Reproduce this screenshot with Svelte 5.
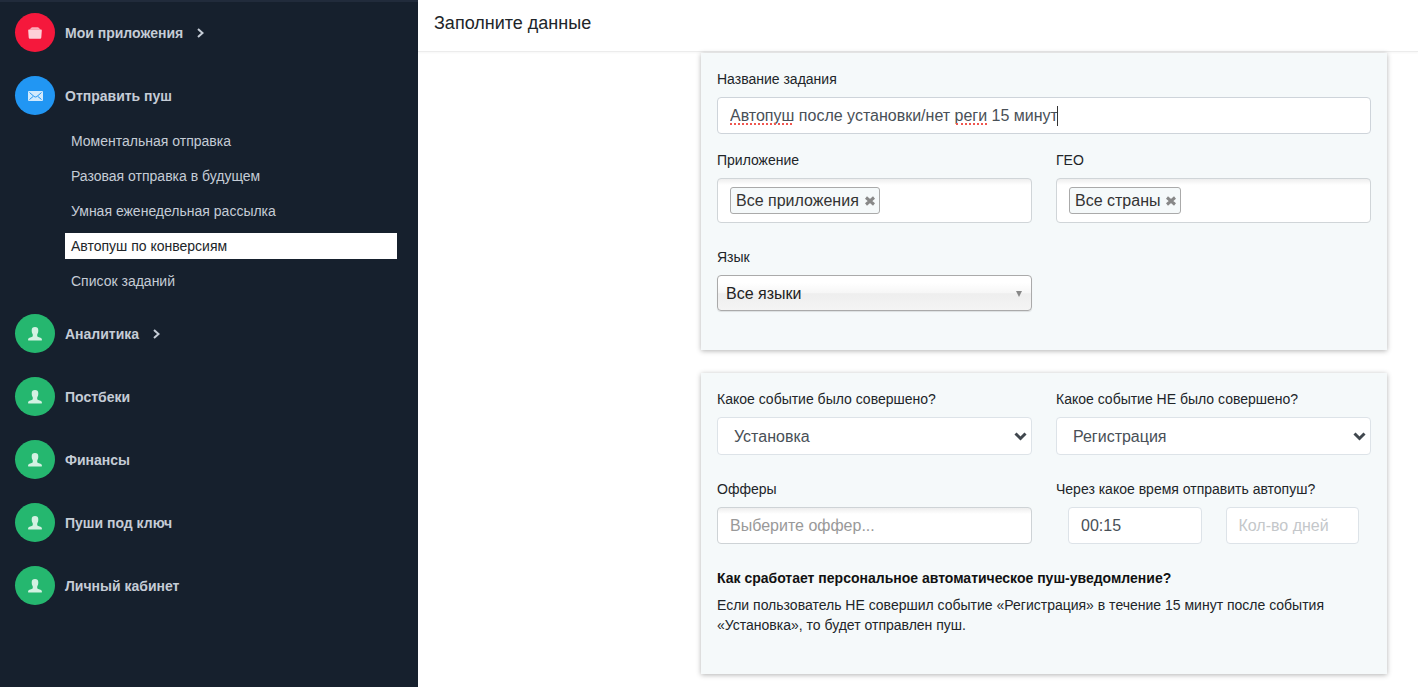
<script>
  let taskName = $state("Автопуш после установки/нет реги 15 минут");
  let apps = $state(["Все приложения"]);
  let countries = $state(["Все страны"]);
  let language = $state("all");
  let doneEvent = $state("install");
  let missedEvent = $state("reg");
  let offer = $state("");
  let delay = $state("00:15");
  let days = $state("");

  const menu = [
    { title: "Мои приложения", icon: "case", color: "red", arrow: true },
    {
      title: "Отправить пуш",
      icon: "mail",
      color: "blue",
      items: [
        "Моментальная отправка",
        "Разовая отправка в будущем",
        "Умная еженедельная рассылка",
        "Автопуш по конверсиям",
        "Список заданий",
      ],
    },
    { title: "Аналитика", icon: "user", color: "green", arrow: true },
    { title: "Постбеки", icon: "user", color: "green" },
    { title: "Финансы", icon: "user", color: "green" },
    { title: "Пуши под ключ", icon: "user", color: "green" },
    { title: "Личный кабинет", icon: "user", color: "green" },
  ];
  const active = "Автопуш по конверсиям";
</script>

{#snippet tags(list, remove)}
  <div class="tag-box">
    {#each list as tag}
      <span class="tag">
        {tag}
        <button type="button" aria-label="Удалить" onclick={() => remove(tag)}>
          <svg viewBox="0 0 10 10" width="10" height="10"><path d="M1 1.500l8 7M9 1.500l-8 7" /></svg>
        </button>
      </span>
    {/each}
  </div>
{/snippet}

<div class="page">
  <aside>
    <nav>
      {#each menu as entry}
        <div class="entry">
          <a class="entry-link" href="#menu">
            <span class="circle {entry.color}">
              {#if entry.icon === "case"}
                <svg viewBox="0 0 14 12" width="14" height="12">
                  <path d="M1.600 2.600L3 .900Q3.500.200 4.300.200h5.400q.8 0 1.300.700l1.400 1.700z" opacity=".8" />
                  <path d="M1 2.500h12q.9 0 .8.900l-.5 7.200q-.1 1.200-1.200 1.200H1.900q-1.100 0-1.200-1.200L.2 3.400q-.1-.9.8-.9z" />
                </svg>
              {:else if entry.icon === "mail"}
                <svg viewBox="0 0 15 10" width="15" height="10">
                  <rect width="15" height="10" rx="1" />
                  <path class="fold" d="M1.500 1.500l4.600 4q1.400 1 2.800 0l4.600-4M1.500 8.500l3.600-3M13.500 8.500l-3.600-3" />
                </svg>
              {:else}
                <svg viewBox="0 0 14 14" width="14" height="14">
                  <path d="M7 0c2.200 0 3.300 1.200 3.300 3.200 0 1.700-.3 2.900-.9 3.800-.2.400-.2.900-.2 1.400 0 .9.300 1.300 1.100 1.600l2.100.8c1 .4 1.500 1.100 1.600 2.200 0 .3-.2.500-.5.500H.5c-.3 0-.5-.2-.5-.5.1-1.100.6-1.800 1.600-2.200l2.100-.8c.8-.3 1.100-.7 1.100-1.600 0-.5 0-1-.2-1.400-.6-.9-.9-2.100-.9-3.800C3.700 1.200 4.800 0 7 0z" />
                </svg>
              {/if}
            </span>
            {entry.title}
            {#if entry.arrow}
              <svg class="arrow" viewBox="0 0 7 10" width="7" height="10"><path d="M1 1l4.500 4L1 9" /></svg>
            {/if}
          </a>
          {#if entry.items}
            <ul>
              {#each entry.items as item}
                <li><a href="#menu" class:active={item === active}>{item}</a></li>
              {/each}
            </ul>
          {/if}
        </div>
      {/each}
    </nav>
  </aside>

  <main>
    <header><h1>Заполните данные</h1></header>

    <form>
      <section class="card">
        <div class="field wide">
          <label for="name">Название задания</label>
          <div class="name-box">
            <input id="name" type="text" spellcheck="false" bind:value={taskName} />
            <i class="typo first"></i>
            <i class="typo second"></i>
            <i class="caret"></i>
          </div>
        </div>
        <div class="field" role="group" aria-labelledby="apps-label">
          <span class="label" id="apps-label">Приложение</span>
          {@render tags(apps, (tag) => (apps = apps.filter((a) => a !== tag)))}
        </div>
        <div class="field" role="group" aria-labelledby="geo-label">
          <span class="label" id="geo-label">ГЕО</span>
          {@render tags(countries, (tag) => (countries = countries.filter((c) => c !== tag)))}
        </div>
        <div class="field spaced">
          <label for="language">Язык</label>
          <div class="select-box">
            <select id="language" class="glossy" bind:value={language}>
              <option value="all">Все языки</option>
            </select>
            <svg class="triangle" viewBox="0 0 6 6" width="6" height="6"><path d="M0 0h6L3 6z" /></svg>
          </div>
        </div>
      </section>

      <section class="card">
        <div class="field">
          <label for="done">Какое событие было совершено?</label>
          <div class="select-box">
            <select id="done" bind:value={doneEvent}>
              <option value="install">Установка</option>
              <option value="reg">Регистрация</option>
            </select>
            <svg class="chevron" viewBox="0 0 13 9" width="13" height="9"><path d="M1.500 1.500l5 5 5-5" /></svg>
          </div>
        </div>
        <div class="field">
          <label for="missed">Какое событие НЕ было совершено?</label>
          <div class="select-box">
            <select id="missed" bind:value={missedEvent}>
              <option value="install">Установка</option>
              <option value="reg">Регистрация</option>
            </select>
            <svg class="chevron" viewBox="0 0 13 9" width="13" height="9"><path d="M1.500 1.500l5 5 5-5" /></svg>
          </div>
        </div>
        <div class="field spaced">
          <label for="offer">Офферы</label>
          <input id="offer" class="offer" type="text" placeholder="Выберите оффер..." bind:value={offer} />
        </div>
        <div class="field spaced">
          <label for="delay">Через какое время отправить автопуш?</label>
          <div class="times">
            <input id="delay" type="text" bind:value={delay} />
            <input type="text" placeholder="Кол-во дней" aria-label="Кол-во дней" bind:value={days} />
          </div>
        </div>
        <div class="help">
          <h2>Как сработает персональное автоматическое пуш-уведомление?</h2>
          <p>Если пользователь НЕ совершил событие «Регистрация» в течение 15 минут после события «Установка», то будет отправлен пуш.</p>
        </div>
      </section>
    </form>
  </main>
</div>

<style>
  :global(body) {
    margin: 0;
    background: #fff;
  }
  .page {
    display: flex;
    min-height: 100vh;
    font-family: "Liberation Sans", Arial, sans-serif;
    font-size: 14px;
    line-height: 20px;
    color: #212529;
  }
  aside {
    flex: 0 0 418px;
    box-sizing: border-box;
    padding: 11px 21px 0 15px;
    background: #16202d;
    border-top: 2px solid #212b3b;
  }
  .entry {
    margin-bottom: 24px;
  }
  .entry-link {
    display: flex;
    align-items: center;
    gap: 10px;
    font-weight: bold;
    color: #c5ccd6;
    text-decoration: none;
  }
  .circle {
    display: flex;
    align-items: center;
    justify-content: center;
    width: 40px;
    height: 39px;
    border-radius: 50%;
    fill: rgba(255, 255, 255, 0.8);
  }
  .red { background: #f5183c; }
  .blue { background: #2196f3; }
  .green { background: #25b76f; }
  .fold {
    fill: none;
    stroke: #2196f3;
    stroke-width: 1;
  }
  .arrow {
    margin-left: 4px;
    fill: none;
    stroke: #c5ccd6;
    stroke-width: 2;
  }
  ul {
    display: grid;
    gap: 9px;
    margin: 13px 0 -4px 50px;
    padding: 0;
    list-style: none;
  }
  li a {
    display: block;
    padding: 3px 6px;
    color: #c5ccd6;
    text-decoration: none;
  }
  li a.active {
    background: #fff;
    color: #212529;
  }

  main {
    flex: 1;
    min-width: 0;
  }
  header {
    padding: 11px 16px 16px;
    border-bottom: 1px solid #ececec;
    box-shadow: 0 1px 2px rgba(0, 0, 0, 0.04);
  }
  h1 {
    margin: 0;
    font-size: 18px;
    font-weight: normal;
    line-height: 24px;
  }
  form {
    display: grid;
    gap: 23px;
    margin: 1px 31px 13px 283px;
  }
  .card {
    display: grid;
    grid-template-columns: 1fr 1fr;
    gap: 16px 24px;
    padding: 16px 16px 39px;
    background: #f5f9fa;
    box-shadow: 0 1px 5px rgba(0, 0, 0, 0.3);
  }
  .wide,
  .help {
    grid-column: 1 / -1;
  }
  .spaced,
  .help {
    margin-top: 8px;
  }
  label,
  .label {
    display: block;
    margin-bottom: 8px;
  }
  input,
  select {
    display: block;
    box-sizing: border-box;
    width: 100%;
    height: 37px;
    padding: 0 12px;
    border: 1px solid #ced4da;
    border-radius: 4px;
    background: #fff;
    font-family: inherit;
    font-size: 16px;
    color: #495057;
    outline: none;
  }
  select {
    height: 38px;
    padding: 0 16px;
    border-color: #dde3e8;
    appearance: none;
  }
  input::placeholder {
    color: #c4c7ca;
    opacity: 1;
  }
  .name-box,
  .select-box {
    position: relative;
  }
  /* spelling marks and caret lie over the text of the input */
  .typo {
    position: absolute;
    top: 26px;
    height: 0;
    border-top: 2px dotted #f0564f;
  }
  .first { left: 13px; width: 62px; }
  .second { left: 239px; width: 31px; }
  .caret {
    position: absolute;
    top: 9px;
    left: 340px;
    width: 1px;
    height: 20px;
    background: #333;
  }
  .tag-box {
    display: flex;
    align-items: flex-start;
    box-sizing: border-box;
    height: 45px;
    padding: 8px 12px;
    border: 1px solid #d0d5d8;
    border-radius: 4px;
    background: linear-gradient(#eee 0, #fff 6px);
  }
  .tag {
    display: flex;
    align-items: center;
    gap: 6px;
    box-sizing: border-box;
    height: 27px;
    padding: 0 4px 0 5px;
    border: 1px solid #aaa;
    border-radius: 3px;
    background: #f5f9fa;
    font-size: 16px;
    color: #333;
  }
  .tag button {
    display: flex;
    padding: 0;
    border: 0;
    background: none;
    cursor: pointer;
  }
  .tag svg {
    fill: none;
    stroke: #888;
    stroke-width: 3;
  }
  .glossy {
    height: 36px;
    padding: 0 8px;
    border-color: #aaa;
    background: linear-gradient(#fff 20%, #f6f6f6 50%, #eee 52%, #f4f4f4 100%);
    box-shadow: 0 1px 1px rgba(0, 0, 0, 0.1);
    color: #222;
  }
  .chevron {
    position: absolute;
    top: 15px;
    right: 5px;
    fill: none;
    stroke: #40474e;
    stroke-width: 3;
    pointer-events: none;
  }
  .triangle {
    position: absolute;
    top: 16px;
    right: 10px;
    fill: #888;
    pointer-events: none;
  }
  .offer {
    border-color: #ced3d6;
    background: linear-gradient(#eee 0, #fff 6px);
  }
  .offer::placeholder {
    color: #999;
  }
  .times {
    display: grid;
    grid-template-columns: 1fr 1fr;
    gap: 24px;
    padding: 0 12px;
  }
  .times input {
    border-color: #dde3e8;
  }
  h2 {
    margin: 0 0 7px;
    font-size: 14px;
    line-height: 20px;
    color: #111;
  }
  p {
    margin: 0;
  }
</style>
